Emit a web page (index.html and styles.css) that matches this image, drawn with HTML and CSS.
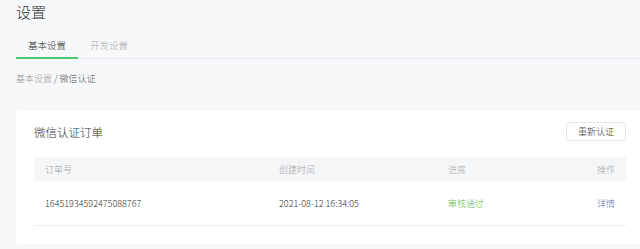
FILE: index.html
```html
<!DOCTYPE html>
<html lang="zh-CN">
<head>
  <meta charset="UTF-8" />
  <meta name="viewport" content="width=device-width, initial-scale=1.0"/>
  <title>设置</title>
  <link rel="stylesheet" href="styles.css">
</head>
<body>
  <div class="page">
    <h1>设置</h1>

    <div class="tabs">
      <span class="tab active">基本设置</span>
      <span class="tab">开发设置</span>
    </div>

    <div class="crumbs">
      <span class="crumb-link">基本设置</span> / 微信认证
    </div>

    <div class="card">
      <div class="card-head">
        <span class="card-title">微信认证订单</span>
        <button class="btn">重新认证</button>
      </div>

      <div class="table">
        <div class="row head">
          <span>订单号</span>
          <span>创建时间</span>
          <span>进度</span>
          <span class="right">操作</span>
        </div>
        <div class="row">
          <span>16451934592475088767</span>
          <span>2021-08-12 16:34:05</span>
          <span class="status">审核通过</span>
          <span class="right"><a href="#" class="link">详情</a></span>
        </div>
      </div>
    </div>
  </div>
</body>
</html>
```

FILE: styles.css
```css
body {
  margin: 0;
  background: #f7f8fa;
  color: #333;
  font-family: "Noto Sans CJK SC", "Liberation Sans", sans-serif;
  font-weight: 300;
}
.page {
  padding-left: 16px;
}
h1 {
  font-size: 15px;
  font-weight: 300;
  line-height: 20px;
  margin: 0;
  padding-top: 2px;
  color: #333;
}
.tabs {
  display: flex;
  border-bottom: 1px solid #e8eaee;
}
.tab {
  font-size: 9.5px;
  line-height: 14px;
  padding: 16px 12px 5px;
  margin-bottom: -1px;
  border-bottom: 2px solid transparent;
  color: #aaa;
}
.tab.active {
  color: #333;
  border-bottom-color: #4cc874;
}
.crumbs {
  font-size: 9px;
  line-height: 12px;
  margin-top: 14px;
  color: #555;
}
.crumb-link {
  color: #999;
}
.card {
  margin-top: 25px;
  padding: 12px 14px 18px 18px;
  background: #fff;
  border-radius: 3px 0 0 3px;
  box-shadow: 0 1px 3px rgba(0,0,0,0.04);
}
.card-head {
  display: flex;
  justify-content: space-between;
  align-items: center;
  height: 19px;
}
.card-title {
  font-size: 11.5px;
  color: #333;
}
.btn {
  height: 19px;
  width: 60px;
  padding: 0;
  font-family: inherit;
  font-weight: 300;
  font-size: 9px;
  color: #333;
  background: #fff;
  border: 1px solid #e6e6e6;
  border-radius: 2px;
}
.table {
  margin-top: 16px;
  font-size: 9px;
}
.row {
  display: grid;
  grid-template-columns: 234px 169px 1fr 80px;
  align-items: center;
  height: 44px;
  border-bottom: 1px solid #ebedf0;
  color: #333;
}
.row span {
  padding: 0 11px;
}
.row.head {
  height: 24px;
  background: #f4f6f8;
  border-bottom: none;
  color: #aaa;
}
.right {
  text-align: right;
}
.status {
  color: #5fb84a;
}
.link {
  color: #5a75a6;
  text-decoration: none;
}
```
